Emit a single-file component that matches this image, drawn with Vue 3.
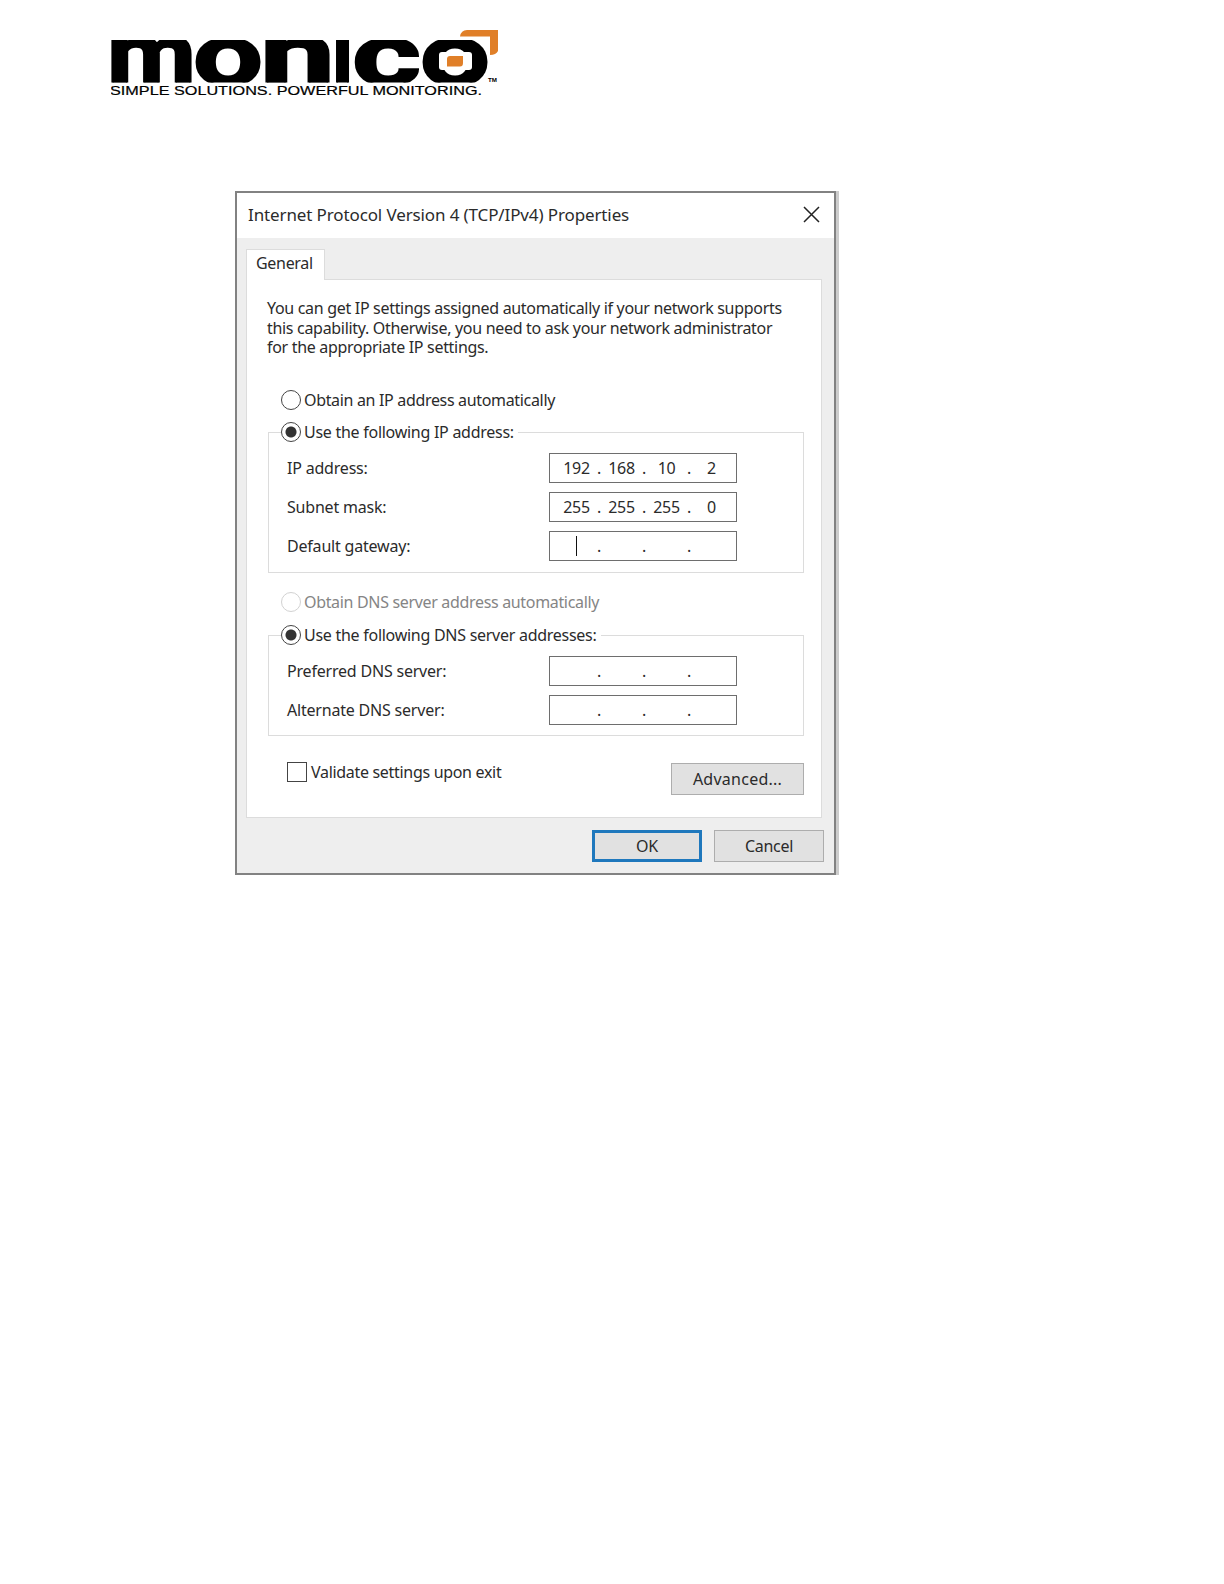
<template>
  <div class="page">
    <header class="brand">
      <svg width="400" height="76" viewBox="0 0 400 76" role="img" aria-label="Monico">
        <defs>
          <clipPath id="wordmark">
            <rect x="0" y="11" width="377" height="42.5" />
          </clipPath>
        </defs>
        <g clip-path="url(#wordmark)" class="wordmark">
          <text
            v-for="(letter, i) in wordmark"
            :key="i"
            :x="letter.x"
            :y="letter.y"
            :textLength="letter.width"
            lengthAdjust="spacingAndGlyphs"
          >{{ letter.char }}</text>
        </g>
        <rect x="328" y="23" width="33" height="18" rx="3" fill="#fff" />
        <path d="M339 27H352V34Q352 37.5 349 37.5H336V30Q336 27 339 27Z" fill="#e07f28" />
        <path d="M356 1H387V22Q385 26 379 26V7.500H349Q350 1 356 1Z" fill="#e07f28" />
        <text class="tagline" x="-1" y="65.5" textLength="372" lengthAdjust="spacingAndGlyphs">SIMPLE SOLUTIONS. POWERFUL MONITORING.</text>
        <text class="tm" x="377" y="53" textLength="9" lengthAdjust="spacingAndGlyphs">TM</text>
      </svg>
    </header>

    <div class="dialog">
      <div class="titlebar">
        <span class="title">Internet Protocol Version 4 (TCP/IPv4) Properties</span>
        <svg class="close" width="17" height="17" viewBox="0 0 17 17">
          <path d="M1 1L16 16M16 1L1 16" stroke="#222" stroke-width="1.5" />
        </svg>
      </div>

      <div class="tab">General</div>
      <div class="panel">
        <p class="intro">
          You can get IP settings assigned automatically if your network supports<br />
          this capability. Otherwise, you need to ask your network administrator<br />
          for the appropriate IP settings.
        </p>

        <template v-for="group in groups" :key="group.name">
          <label class="option" :class="[group.name, { disabled: group.autoDisabled }]">
            <span class="radio"></span>
            <span class="auto-text">{{ group.auto }}</span>
          </label>
          <div class="group" :class="group.name">
            <label class="option legend">
              <span class="radio checked"></span>
              <span class="manual-text">{{ group.manual }}</span>
            </label>
            <div v-for="field in group.fields" :key="field.label" class="row">
              <span class="label">{{ field.label }}</span>
              <div class="ip">
                <template v-for="(octet, i) in field.octets" :key="i">
                  <span v-if="i > 0" class="dot">.</span>
                  <span class="octet">{{ octet }}<i v-if="field.focused && i === 0" class="caret"></i></span>
                </template>
              </div>
            </div>
          </div>
        </template>

        <div class="bottom">
          <label class="validate"><span class="checkbox"></span>Validate settings upon exit</label>
          <button class="button advanced">Advanced...</button>
        </div>
      </div>

      <div class="actions">
        <button class="button primary">OK</button>
        <button class="button">Cancel</button>
      </div>
    </div>
  </div>
</template>

<script setup>
// letters are oversized and clipped top and bottom, which squares off the bowls
const wordmark = [
  { char: 'm', x: -4, y: 55, width: 89 },
  { char: 'o', x: 82, y: 55.5, width: 70 },
  { char: 'n', x: 149, y: 55, width: 75 },
  { char: 'i', x: 221, y: 55, width: 21 },
  { char: 'c', x: 241, y: 55.5, width: 69 },
  { char: 'o', x: 309, y: 55.5, width: 70 }
]

const groups = [
  {
    name: 'address',
    auto: 'Obtain an IP address automatically',
    manual: 'Use the following IP address:',
    autoDisabled: false,
    fields: [
      { label: 'IP address:', octets: ['192', '168', '10', '2'] },
      { label: 'Subnet mask:', octets: ['255', '255', '255', '0'] },
      { label: 'Default gateway:', octets: ['', '', '', ''], focused: true }
    ]
  },
  {
    name: 'dns',
    auto: 'Obtain DNS server address automatically',
    manual: 'Use the following DNS server addresses:',
    autoDisabled: true,
    fields: [
      { label: 'Preferred DNS server:', octets: ['', '', '', ''] },
      { label: 'Alternate DNS server:', octets: ['', '', '', ''] }
    ]
  }
]
</script>

<style>
body {
  margin: 0;
  background: #fff;
}
</style>

<style scoped>
.page {
  box-sizing: border-box;
  width: 1224px;
  height: 1584px;
  padding-top: 29px;
  overflow: hidden;
  background: #fff;
  color: #2b2b2b;
  font: 16px/20px "Noto Sans", "Open Sans", sans-serif;
  letter-spacing: -0.31px;
  white-space: nowrap;
}

.page * {
  box-sizing: border-box;
}

.brand {
  height: 162px;
  padding-left: 111px;
}

.brand svg {
  display: block;
}

.wordmark {
  font: bold 88px Roboto, "Liberation Sans", sans-serif;
  letter-spacing: 0;
  stroke: #000;
  stroke-width: 2px;
  fill: #000;
}

.tagline {
  font: 12.5px "Liberation Sans", sans-serif;
  letter-spacing: 0;
  fill: #000;
  stroke: #000;
  stroke-width: 0.2px;
}

.tm {
  font: bold 5px "Liberation Sans", sans-serif;
  letter-spacing: 0;
}

.dialog {
  width: 601px;
  height: 684px;
  margin-left: 235px;
  border: 2px solid #828282;
  background: #eee;
  box-shadow: 3px 0 0 #ccc;
}

.titlebar {
  display: flex;
  align-items: center;
  justify-content: space-between;
  height: 45px;
  padding: 0 14px 0 11px;
  background: #fff;
}

.title {
  margin-bottom: 2px;
  font-size: 17px;
  letter-spacing: -0.12px;
}

.close {
  margin-bottom: 3px;
}

.tab {
  position: relative;
  z-index: 1;
  width: 79px;
  height: 31px;
  margin: 11px 0 0 9px;
  padding: 3px 0 0 9px;
  border: 1px solid #dcdcdc;
  border-bottom: 0;
  background: #fff;
}

.panel {
  width: 576px;
  height: 539px;
  margin: -1px 0 0 9px;
  padding: 19px 16px 0 21px;
  border: 1px solid #dcdcdc;
  background: #fff;
}

.intro {
  height: 59px;
  margin: 0 0 0 -1px;
  line-height: 19.5px;
}

.option {
  display: flex;
  align-items: center;
  width: max-content;
  height: 20px;
  margin-left: 13px;
}

.option.address {
  margin-top: 32px;
}

.option.dns {
  margin-top: 19px;
}

.auto-text {
  letter-spacing: -0.33px;
}

.manual-text {
  letter-spacing: -0.27px;
}

.radio {
  width: 20px;
  height: 20px;
  margin-right: 3px;
  border: 1.5px solid #444;
  border-radius: 50%;
  background: #fff;
}

.radio.checked {
  background: radial-gradient(circle, #333 5px, #fff 6px);
}

.disabled {
  color: #858585;
}

.disabled .radio {
  border-color: #d2d2d2;
}

.group {
  width: 536px;
  padding-left: 18px;
  border: 1px solid #dcdcdc;
}

.group.address {
  height: 141px;
  margin-top: 22px;
}

.group.dns {
  height: 101px;
  margin-top: 23px;
}

.option.legend {
  margin: -11px 0 11px -6px;
  padding-right: 4px;
  background: #fff;
}

.row {
  display: flex;
  align-items: center;
  height: 30px;
  margin-bottom: 9px;
}

.label {
  width: 262px;
  letter-spacing: -0.2px;
}

.ip {
  display: flex;
  align-items: center;
  width: 188px;
  height: 30px;
  padding-left: 9.5px;
  border: 1.5px solid #6e6e6e;
}

.octet {
  display: flex;
  justify-content: center;
  width: 34px;
}

.dot {
  width: 11px;
  text-align: center;
}

.caret {
  width: 1.5px;
  height: 20px;
  background: #111;
}

.bottom {
  display: flex;
  justify-content: space-between;
  align-items: flex-start;
  margin-top: 26px;
  padding: 0 1px 0 19px;
}

.validate {
  display: flex;
  align-items: center;
}

.checkbox {
  width: 20px;
  height: 20px;
  margin-right: 4px;
  border: 1.5px solid #444;
}

.button {
  width: 110px;
  height: 32px;
  padding: 0;
  border: 1px solid #adadad;
  background: #e1e1e1;
  color: inherit;
  font: inherit;
  letter-spacing: inherit;
}

.advanced {
  width: 133px;
  margin-top: 1px;
  letter-spacing: 0.25px;
}

.primary {
  border: 3px solid #1f78bd;
}

.actions {
  display: flex;
  justify-content: flex-end;
  gap: 12px;
  padding: 12px 10px 0 0;
}
</style>
